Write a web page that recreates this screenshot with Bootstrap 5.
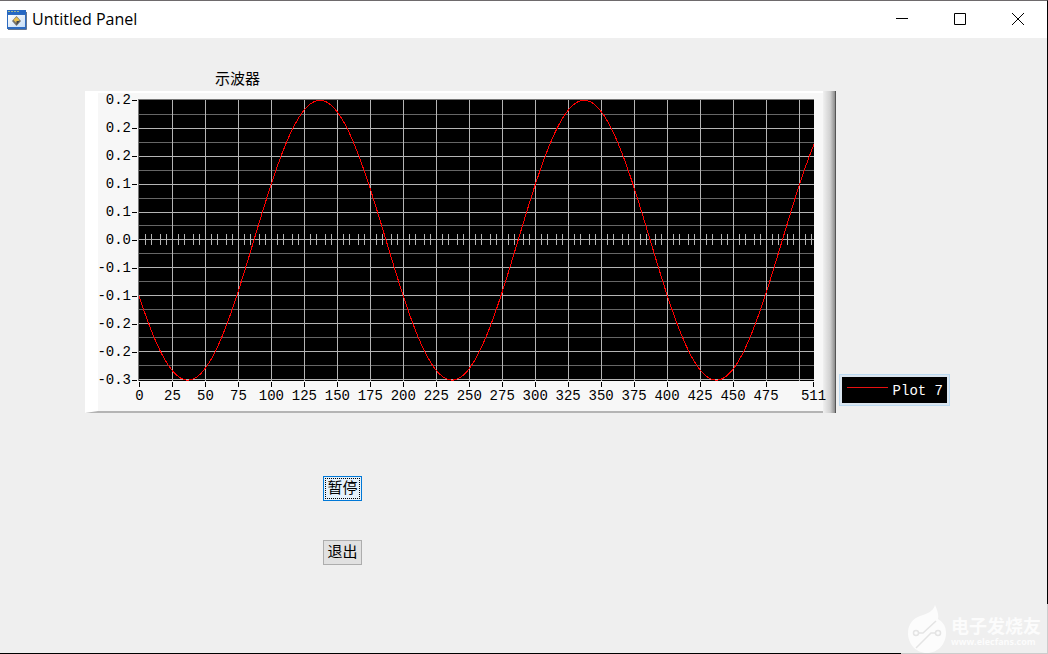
<!DOCTYPE html>
<html lang="zh-CN">
<head>
<meta charset="utf-8">
<meta name="viewport" content="width=device-width, initial-scale=1">
<title>Untitled Panel</title>
<link href="https://cdn.jsdelivr.net/npm/bootstrap@5.3.0/dist/css/bootstrap.min.css" rel="stylesheet">
<style>
  body { background: #efefef; color: #000; font-family: "Liberation Mono", "Noto Sans CJK SC", monospace; font-size: 14px; line-height: 16px; }
  .app-window { border-top: 1px solid #6e6a6c; border-right: 1px solid #000; border-bottom: 1px solid #000; }
  .title-bar { height: 37px; background: #fff; padding-left: 7px; }
  .title-text { font-family: "Open Sans", sans-serif; font-size: 16px; line-height: 20px; font-weight: 400; padding: 0 0 2px 5px; }
  .caption-btn { width: 58px; height: 37px; background: none; border: 0; padding: 0 1px 2px 0; }
  .caption-btn svg, .title-bar svg { display: block; }
  .work-area { padding: 32px 97px 88px 85px; }
  .scope-title { font-size: 15px; line-height: 16px; margin: 0 0 5px 130px; font-family: "Noto Sans CJK SC", sans-serif; font-weight: 400; }
  .scope { background: #f7f7f7; height: 322px; min-width: 0; border-top: 2px solid #fff; border-left: 13px solid #fff; border-bottom: 2px solid #b4b4b4; padding: 6px 0 0 0; }
  .bevel { width: 13px; margin: -8px 0 -2px 9px; border-right: 1px solid #555; background: linear-gradient(90deg, #f0f0f0, #d0d0d0 60%, #8c8c8c); }
  .y-axis { width: 40px; height: 282px; padding: 1px 0; }
  .y-axis li { height: 0; display: flex; align-items: center; justify-content: flex-end; white-space: nowrap; }
  .y-axis li::after { content: ""; width: 5px; height: 1px; background: #000; margin: 0 1px 0 1px; flex: none; }
  .plot { display: block; width: 100%; height: 282px; background: #000; border-left: 1px solid #777; border-top: 1px solid #777; }
  .plot path { fill: none; vector-effect: non-scaling-stroke; shape-rendering: crispEdges; stroke-width: 1px; }
  .x-axis { position: relative; z-index: 1; display: grid; grid-template-columns: repeat(20, 25fr) 11fr 0; padding: 1px 1px 0 1px; }
  .x-axis li { width: 1px; display: flex; flex-direction: column; align-items: center; white-space: nowrap; }
  .x-axis li::before { content: ""; width: 1px; height: 5px; background: #000; margin-bottom: 1px; flex: none; }
  .legend-box { background: #000; color: #fff; width: 111px; height: 32px; border: 1px solid #bcdaf1; outline: 2px solid #dae5ef; outline-offset: -3px; margin: 0 0 7px 3px; padding: 4px 6px 2px 7px; }
  .legend-line { width: 41px; height: 1px; background: #e81010; margin-bottom: 8px; }
  .panel-btn { display: block; width: 39px; height: 25px; padding: 0 0 3px; border: 1px solid #adadad; background: #e1e1e1; color: #000; font: 400 15px/20px "Noto Sans CJK SC", sans-serif; }
  .panel-btn.current { border-color: #0078d7; background: #e5f1fb; outline: 1px dotted #000; outline-offset: -3px; }
  .commands { margin: 63px 0 0 238px; gap: 39px; }
  .watermark { right: -1px; bottom: -1px; width: 147px; height: 50px; background: #efefef; border-right: 1px solid #ccc; border-bottom: 1px solid #ccc; color: #fcfcfc; padding-left: 6px; }
  .mark-name { font: 700 18px/20px "Noto Sans CJK SC", sans-serif; }
  .mark-site { font: 700 9px/10px "Open Sans", sans-serif; margin-top: 2px; }
</style>
</head>
<body>
<div class="app-window min-vh-100 position-relative">
  <header class="title-bar d-flex align-items-center">
    <svg width="20" height="20" viewBox="0 0 20 20" class="flex-shrink-0" aria-hidden="true">
      <defs><linearGradient id="paper" x2="1" y2="1"><stop stop-color="#fff"/><stop offset="1" stop-color="#c5dcf5"/></linearGradient></defs>
      <path d="M0 1h19v18H0z" fill="#2d6bc0"/><path d="M1 5h17v12H1z" fill="url(#paper)"/>
      <path d="M0 0h19v4H0z" fill="#2668c4"/><path d="M1 1.500h2M4 1.500h2M7 1.500h2M10 1.500h2" stroke="#a0b990"/>
      <path d="M19.500 2v17.500H1" fill="none" stroke="#65758c"/>
      <path d="M9.500 6l4.500 5-4.500 5L5 11z" fill="#77736a"/><path d="M9.500 7l3 3-3 3-3-3z" fill="#ecc04c"/><path d="M9.500 11h3l-3 4z" fill="#3d414c"/>
    </svg>
    <h1 class="title-text mb-0 me-auto">Untitled Panel</h1>
    <button class="caption-btn" type="button" aria-label="Minimize"><svg class="mx-auto" width="12" height="12"><path d="M0 5.500h12" stroke="#000"/></svg></button>
    <button class="caption-btn" type="button" aria-label="Maximize"><svg class="mx-auto" width="12" height="12"><path d="M.5.500h11v11H.5z" fill="none" stroke="#000"/></svg></button>
    <button class="caption-btn" type="button" aria-label="Close"><svg class="mx-auto" width="12" height="12"><path d="M0 0l12 12M12 0L0 12" stroke="#000"/></svg></button>
  </header>
  <main class="work-area">
    <h2 class="scope-title">示波器</h2>
    <div class="d-flex align-items-end">
      <section class="scope d-flex flex-grow-1">
        <ol class="y-axis list-unstyled d-flex flex-column justify-content-between flex-shrink-0 mb-0">
          <li>0.2</li><li>0.2</li><li>0.2</li><li>0.1</li><li>0.1</li><li>0.0</li><li>-0.1</li><li>-0.1</li><li>-0.2</li><li>-0.2</li><li>-0.3</li>
        </ol>
        <div class="flex-grow-1">
          <svg class="plot" viewBox="0 0 511 281" preserveAspectRatio="none" role="img" aria-label="示波器">
            <path id="minor" stroke="#666"/><path id="major" stroke="#b4b4b4"/><path id="wave" stroke="#f00"/>
          </svg>
          <ol class="x-axis list-unstyled mb-0">
            <li>0</li><li>25</li><li>50</li><li>75</li><li>100</li><li>125</li><li>150</li><li>175</li><li>200</li><li>225</li><li>250</li><li>275</li><li>300</li><li>325</li><li>350</li><li>375</li><li>400</li><li>425</li><li>450</li><li>475</li><li class="invisible"></li><li>511</li>
          </ol>
        </div>
        <div class="bevel flex-shrink-0"></div>
      </section>
      <div class="legend-box d-flex align-items-center justify-content-between flex-shrink-0"><span class="legend-line"></span><span>Plot 7</span></div>
    </div>
    <div class="commands d-flex flex-column">
      <button class="panel-btn current" type="button">暂停</button>
      <button class="panel-btn" type="button">退出</button>
    </div>
  </main>
  <div class="watermark position-absolute d-flex align-items-center">
    <svg width="40" height="48" viewBox="0 0 40 48" class="flex-shrink-0" aria-hidden="true">
      <path d="M28 0c-2 7-9 9-15 11C5 14 1 20 1 28c0 11 8 20 19 20s19-9 19-20c0-7-3-11-8-14 1-5-1-9-3-14z" fill="#fcfcfc"/>
      <path d="M11 28h5l13-12M29 28h-5L9 43" fill="none" stroke="#e4e4e4" stroke-width="1.500"/>
      <circle cx="9" cy="28" r="2.500" fill="none" stroke="#e4e4e4" stroke-width="1.500"/><circle cx="31" cy="28" r="2.500" fill="none" stroke="#e4e4e4" stroke-width="1.500"/>
    </svg>
    <div class="ps-1 pt-1 text-nowrap"><div class="mark-name">电子发烧友</div><div class="mark-site">www.elecfans.com</div></div>
  </div>
</div>
<script src="https://cdn.jsdelivr.net/npm/bootstrap@5.3.0/dist/js/bootstrap.bundle.min.js"></script>
<script>
  const rowStep = 27.9, zero = 139.9;
  let minor = '', major = '', wave = '';
  for (let i = 1; i <= 10; i++) {
    minor += `M0 ${(i - .5) * rowStep + .4}H511`;
    major += `M0 ${i * rowStep + .4}H511`;
  }
  for (let x = 0; x < 511; x += 25) {
    if (x) major += `M${x + .3} 0V281`;
    for (const t of [4.6, 9.1, 15.9, 20.5])
      if (x + t < 511) major += `M${x + t + .3} ${zero - 5.5}v11`;
  }
  // One full cycle every 200 samples, lowest at sample 37.
  for (let x = 0; x <= 511; x++)
    wave += (x ? 'L' : 'M') + x + ' ' + (zero + .3 + 139.9 * Math.cos((x - 37) * Math.PI / 100)).toFixed(2);
  document.getElementById('minor').setAttribute('d', minor);
  document.getElementById('major').setAttribute('d', major);
  document.getElementById('wave').setAttribute('d', wave);
</script>
</body>
</html>
